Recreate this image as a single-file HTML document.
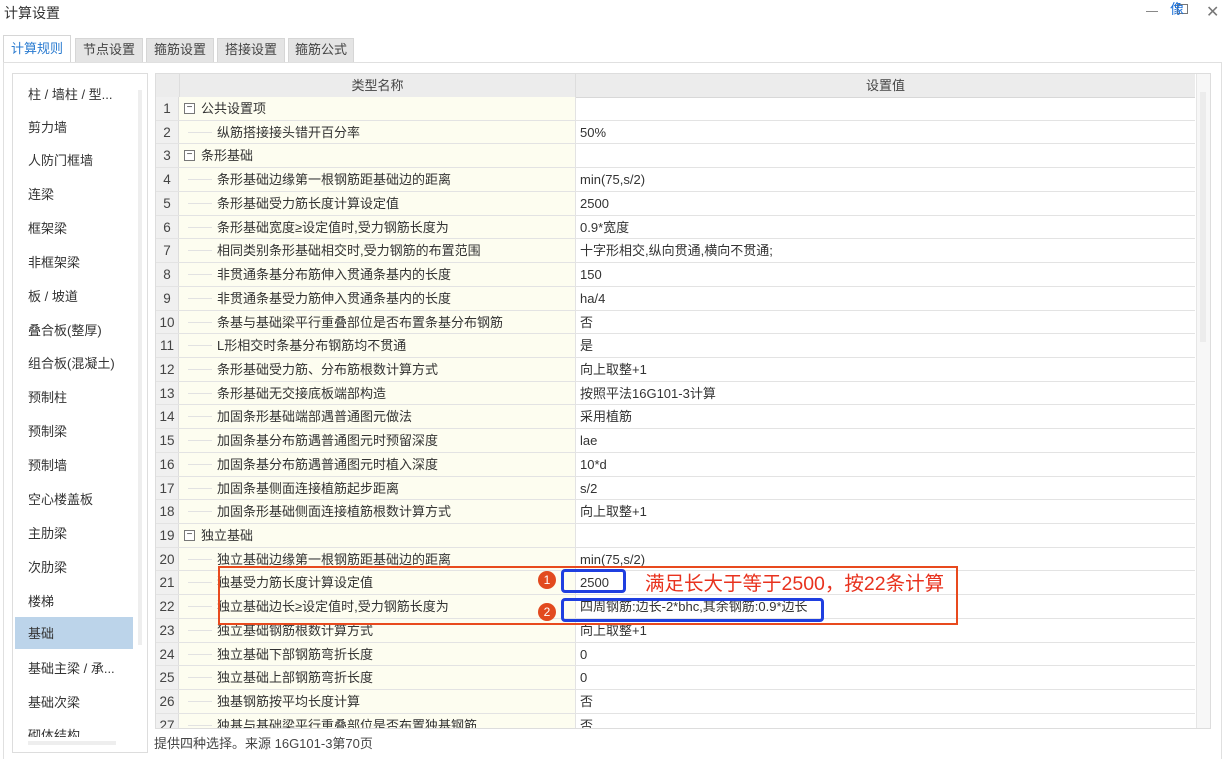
<!DOCTYPE html>
<html><head><meta charset="utf-8"><style>
*{margin:0;padding:0;box-sizing:border-box}
body{width:1222px;height:759px;background:#fff;font-family:"Liberation Sans","Noto Sans CJK SC",sans-serif;font-size:13px;color:#333;position:relative;overflow:hidden}
.abs{position:absolute}
.tab{position:absolute;top:38px;height:24px;background:#e4e4e4;border:1px solid #d6d6d6;border-bottom:none;font-size:13px;line-height:22px;text-align:center;color:#444}
.li{position:absolute;left:28px;font-size:13px;color:#333}
.row{position:absolute;left:156px;width:1039px;height:23.72px;border-bottom:1px solid #e3e3e3}
.row .n{position:absolute;left:0;width:23px;height:100%;background:#f0f0f0;border-right:1px solid #ddd;text-align:center;line-height:23px;font-size:13.5px;color:#444}
.row .k{position:absolute;left:23px;width:397px;height:100%;background:#fdfdf0;border-right:1px solid #e3e3e3;line-height:23px;font-size:13px}
.row .v{position:absolute;left:424px;line-height:23px;font-size:13px}
.row .k .t{position:absolute;left:38px}
.row .k .ln{position:absolute;left:9px;top:11px;width:24px;border-top:1px solid #e2e2e2}
.box{position:absolute;left:5px;top:6px;width:11px;height:11px;border:1px solid #777;font-size:10px;line-height:8px;text-align:center;background:#fff}
.row .k .g{position:absolute;left:22px}
</style></head><body>
<div class="abs" style="left:4px;top:3px;font-size:14px;color:#333">计算设置</div>
<div class="abs" style="left:1146px;top:11px;width:12px;border-top:1px solid #888"></div>
<div class="abs" style="left:1177px;top:4px;width:11px;height:10px;border:1px solid #777"></div>
<div class="abs" style="left:1170px;top:-1px;font-size:14px;color:#1a6fd8">像</div>
<div class="abs" style="left:1206px;top:2px;font-size:16px;color:#777">✕</div>
<div class="tab" style="left:3px;top:35px;width:68px;height:28px;background:#fff;color:#2a7bd0;line-height:26px">计算规则</div>
<div class="tab" style="left:75px;width:68px">节点设置</div>
<div class="tab" style="left:146px;width:68px">箍筋设置</div>
<div class="tab" style="left:217px;width:68px">搭接设置</div>
<div class="tab" style="left:288px;width:66px">箍筋公式</div>
<div class="abs" style="left:3px;top:62px;width:1219px;height:697px;border:1px solid #e0e0e0;border-bottom:none"></div>
<div class="abs" style="left:12px;top:73px;width:136px;height:680px;border:1px solid #ddd;background:#fff"></div>
<div class="abs" style="left:138px;top:90px;width:4px;height:555px;background:#eee"></div>
<div class="abs" style="left:28px;top:741px;width:88px;height:4px;background:#eee"></div>
<div class="abs" style="left:15px;top:617px;width:118px;height:32px;background:#bcd4ea"></div>
<div class="li" style="top:84px">柱 / 墙柱 / 型...</div>
<div class="li" style="top:117px">剪力墙</div>
<div class="li" style="top:150px">人防门框墙</div>
<div class="li" style="top:184px">连梁</div>
<div class="li" style="top:218px">框架梁</div>
<div class="li" style="top:252px">非框架梁</div>
<div class="li" style="top:286px">板 / 坡道</div>
<div class="li" style="top:320px">叠合板(整厚)</div>
<div class="li" style="top:353px">组合板(混凝土)</div>
<div class="li" style="top:387px">预制柱</div>
<div class="li" style="top:421px">预制梁</div>
<div class="li" style="top:455px">预制墙</div>
<div class="li" style="top:489px">空心楼盖板</div>
<div class="li" style="top:523px">主肋梁</div>
<div class="li" style="top:557px">次肋梁</div>
<div class="li" style="top:591px">楼梯</div>
<div class="li" style="top:623px">基础</div>
<div class="li" style="top:658px">基础主梁 / 承...</div>
<div class="li" style="top:692px">基础次梁</div>
<div class="li" style="top:725px;height:12px;overflow:hidden">砌体结构</div>
<div class="abs" style="left:155px;top:73px;width:1056px;height:656px;border:1px solid #ddd;overflow:hidden">
<div class="abs" style="left:0;top:0;width:1039px;height:24px;background:#ececec;border-bottom:1px solid #d8d8d8">
<div class="abs" style="left:23px;width:397px;height:24px;border-left:1px solid #ddd;border-right:1px solid #ddd;text-align:center;line-height:24px;color:#444">类型名称</div>
<div class="abs" style="left:420px;width:619px;text-align:center;line-height:24px;color:#444">设置值</div>
</div>
<div class="abs" style="left:1040px;top:0;width:15px;height:656px;background:#f7f7f7;border-left:1px solid #e6e6e6"></div>
<div class="abs" style="left:1044px;top:18px;width:6px;height:250px;background:#ececec"></div>
</div>
<div class="row" style="top:97px"><div class="n">1</div><div class="k"><div class="box">−</div><div class="g">公共设置项</div></div><div class="v"></div></div>
<div class="row" style="top:120.7px"><div class="n">2</div><div class="k"><div class="ln"></div><div class="t">纵筋搭接接头错开百分率</div></div><div class="v">50%</div></div>
<div class="row" style="top:144.4px"><div class="n">3</div><div class="k"><div class="box">−</div><div class="g">条形基础</div></div><div class="v"></div></div>
<div class="row" style="top:168.2px"><div class="n">4</div><div class="k"><div class="ln"></div><div class="t">条形基础边缘第一根钢筋距基础边的距离</div></div><div class="v">min(75,s/2)</div></div>
<div class="row" style="top:191.9px"><div class="n">5</div><div class="k"><div class="ln"></div><div class="t">条形基础受力筋长度计算设定值</div></div><div class="v">2500</div></div>
<div class="row" style="top:215.6px"><div class="n">6</div><div class="k"><div class="ln"></div><div class="t">条形基础宽度≥设定值时,受力钢筋长度为</div></div><div class="v">0.9*宽度</div></div>
<div class="row" style="top:239.3px"><div class="n">7</div><div class="k"><div class="ln"></div><div class="t">相同类别条形基础相交时,受力钢筋的布置范围</div></div><div class="v">十字形相交,纵向贯通,横向不贯通;</div></div>
<div class="row" style="top:263px"><div class="n">8</div><div class="k"><div class="ln"></div><div class="t">非贯通条基分布筋伸入贯通条基内的长度</div></div><div class="v">150</div></div>
<div class="row" style="top:286.8px"><div class="n">9</div><div class="k"><div class="ln"></div><div class="t">非贯通条基受力筋伸入贯通条基内的长度</div></div><div class="v">ha/4</div></div>
<div class="row" style="top:310.5px"><div class="n">10</div><div class="k"><div class="ln"></div><div class="t">条基与基础梁平行重叠部位是否布置条基分布钢筋</div></div><div class="v">否</div></div>
<div class="row" style="top:334.2px"><div class="n">11</div><div class="k"><div class="ln"></div><div class="t">L形相交时条基分布钢筋均不贯通</div></div><div class="v">是</div></div>
<div class="row" style="top:357.9px"><div class="n">12</div><div class="k"><div class="ln"></div><div class="t">条形基础受力筋、分布筋根数计算方式</div></div><div class="v">向上取整+1</div></div>
<div class="row" style="top:381.6px"><div class="n">13</div><div class="k"><div class="ln"></div><div class="t">条形基础无交接底板端部构造</div></div><div class="v">按照平法16G101-3计算</div></div>
<div class="row" style="top:405.4px"><div class="n">14</div><div class="k"><div class="ln"></div><div class="t">加固条形基础端部遇普通图元做法</div></div><div class="v">采用植筋</div></div>
<div class="row" style="top:429.1px"><div class="n">15</div><div class="k"><div class="ln"></div><div class="t">加固条基分布筋遇普通图元时预留深度</div></div><div class="v">lae</div></div>
<div class="row" style="top:452.8px"><div class="n">16</div><div class="k"><div class="ln"></div><div class="t">加固条基分布筋遇普通图元时植入深度</div></div><div class="v">10*d</div></div>
<div class="row" style="top:476.5px"><div class="n">17</div><div class="k"><div class="ln"></div><div class="t">加固条基侧面连接植筋起步距离</div></div><div class="v">s/2</div></div>
<div class="row" style="top:500.2px"><div class="n">18</div><div class="k"><div class="ln"></div><div class="t">加固条形基础侧面连接植筋根数计算方式</div></div><div class="v">向上取整+1</div></div>
<div class="row" style="top:524px"><div class="n">19</div><div class="k"><div class="box">−</div><div class="g">独立基础</div></div><div class="v"></div></div>
<div class="row" style="top:547.7px"><div class="n">20</div><div class="k"><div class="ln"></div><div class="t">独立基础边缘第一根钢筋距基础边的距离</div></div><div class="v">min(75,s/2)</div></div>
<div class="row" style="top:571.4px"><div class="n">21</div><div class="k"><div class="ln"></div><div class="t">独基受力筋长度计算设定值</div></div><div class="v">2500</div></div>
<div class="row" style="top:595.1px"><div class="n">22</div><div class="k"><div class="ln"></div><div class="t">独立基础边长≥设定值时,受力钢筋长度为</div></div><div class="v">四周钢筋:边长-2*bhc,其余钢筋:0.9*边长</div></div>
<div class="row" style="top:618.8px"><div class="n">23</div><div class="k"><div class="ln"></div><div class="t">独立基础钢筋根数计算方式</div></div><div class="v">向上取整+1</div></div>
<div class="row" style="top:642.6px"><div class="n">24</div><div class="k"><div class="ln"></div><div class="t">独立基础下部钢筋弯折长度</div></div><div class="v">0</div></div>
<div class="row" style="top:666.3px"><div class="n">25</div><div class="k"><div class="ln"></div><div class="t">独立基础上部钢筋弯折长度</div></div><div class="v">0</div></div>
<div class="row" style="top:690px"><div class="n">26</div><div class="k"><div class="ln"></div><div class="t">独基钢筋按平均长度计算</div></div><div class="v">否</div></div>
<div class="row" style="top:713.7px;height:14px;overflow:hidden;border:none"><div class="n">27</div><div class="k"><div class="ln"></div><div class="t">独基与基础梁平行重叠部位是否布置独基钢筋</div></div><div class="v">否</div></div>
<div class="abs" style="left:154px;top:733px;font-size:13px;color:#444">提供四种选择。来源 16G101-3第70页</div>
<div class="abs" style="left:218px;top:566px;width:740px;height:59px;border:2px solid #e84a1e"></div>
<div class="abs" style="left:561px;top:569px;width:65px;height:24px;border:3px solid #1f3fe0;border-radius:4px"></div>
<div class="abs" style="left:561px;top:598px;width:263px;height:24px;border:3px solid #1f3fe0;border-radius:4px"></div>
<div class="abs" style="left:538px;top:571px;width:18px;height:18px;border-radius:50%;background:#e24a1f;color:#fff;font-size:12px;text-align:center;line-height:18px">1</div>
<div class="abs" style="left:538px;top:603px;width:18px;height:18px;border-radius:50%;background:#e24a1f;color:#fff;font-size:12px;text-align:center;line-height:18px">2</div>
<div class="abs" style="left:645px;top:567px;font-size:19.5px;color:#e8321e;white-space:nowrap">满足长大于等于2500，按22条计算</div>
</body></html>
